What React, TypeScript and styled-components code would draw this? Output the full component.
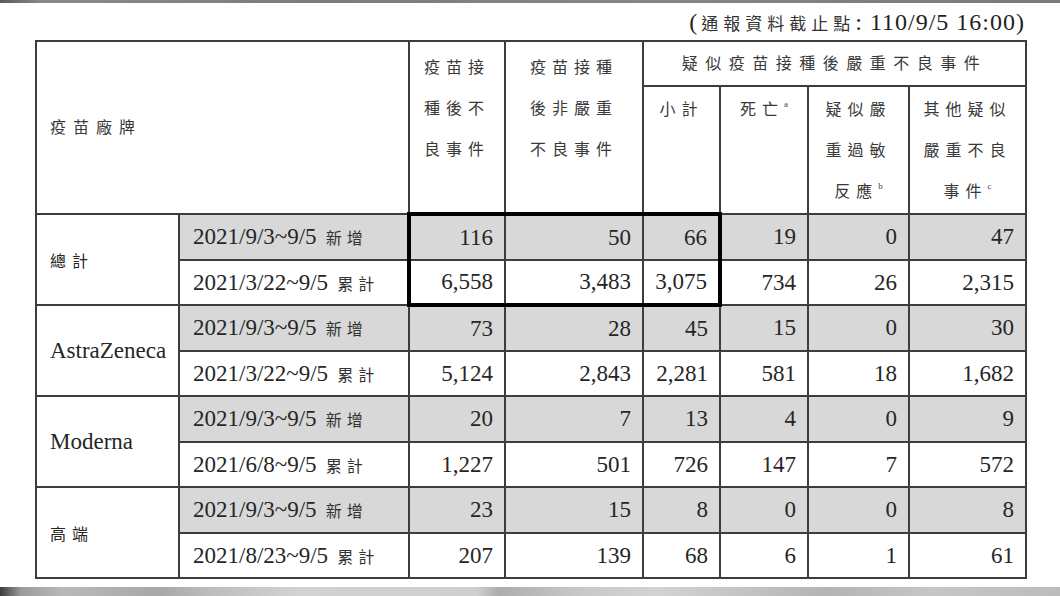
import React from 'react';
import styled, { createGlobalStyle, css } from 'styled-components';

const GlobalStyle = createGlobalStyle`
  html, body {
    margin: 0;
    padding: 0;
    background: #ffffff;
  }
`;

const latin = `"Liberation Serif", "Times New Roman", serif`;
const cjk = `"Liberation Serif", "Noto Sans CJK TC", serif`;

interface ValueRow {
    period: string;
    kind: string;
    values: string[];
}

interface Group {
    brand: string;
    brandCjk?: boolean;
    rows: ValueRow[];
}

const groups: Group[] = [
    {
        brand: '總計',
        brandCjk: true,
        rows: [
            { period: '2021/9/3~9/5', kind: '新增', values: ['116', '50', '66', '19', '0', '47'] },
            { period: '2021/3/22~9/5', kind: '累計', values: ['6,558', '3,483', '3,075', '734', '26', '2,315'] },
        ],
    },
    {
        brand: 'AstraZeneca',
        rows: [
            { period: '2021/9/3~9/5', kind: '新增', values: ['73', '28', '45', '15', '0', '30'] },
            { period: '2021/3/22~9/5', kind: '累計', values: ['5,124', '2,843', '2,281', '581', '18', '1,682'] },
        ],
    },
    {
        brand: 'Moderna',
        rows: [
            { period: '2021/9/3~9/5', kind: '新增', values: ['20', '7', '13', '4', '0', '9'] },
            { period: '2021/6/8~9/5', kind: '累計', values: ['1,227', '501', '726', '147', '7', '572'] },
        ],
    },
    {
        brand: '高端',
        brandCjk: true,
        rows: [
            { period: '2021/9/3~9/5', kind: '新增', values: ['23', '15', '8', '0', '0', '8'] },
            { period: '2021/8/23~9/5', kind: '累計', values: ['207', '139', '68', '6', '1', '61'] },
        ],
    },
];

const colWidths = [143, 230, 96, 138, 77, 88, 101, 117];

const App = () => {
    return (
        <Page>
            <GlobalStyle />
            <TopBar />
            <Content>
                <Caption>
                    (<CaptionCjk>通報資料截止點</CaptionCjk>: 110/9/5 16:00)
                </Caption>
                <Table>
                    <colgroup>
                        {colWidths.map((w, i) => <col key={i} style={{ width: w }} />)}
                    </colgroup>
                    <thead>
                        <HeadRow $height={45}>
                            <HeadCell colSpan={2} rowSpan={2} $align="left" $valign="middle">
                                <HeadText $spacing={7}>疫苗廠牌</HeadText>
                            </HeadCell>
                            <HeadCell rowSpan={2} $padTop={5}>
                                <HeadText>疫苗接<br />種後不<br />良事件</HeadText>
                            </HeadCell>
                            <HeadCell rowSpan={2} $padTop={5}>
                                <HeadText>疫苗接種<br />後非嚴重<br />不良事件</HeadText>
                            </HeadCell>
                            <HeadCell colSpan={4} $valign="middle">
                                <HeadText $spacing={7.5}>疑似疫苗接種後嚴重不良事件</HeadText>
                            </HeadCell>
                        </HeadRow>
                        <HeadRow $height={128}>
                            <HeadCell $padTop={2}><HeadText>小計</HeadText></HeadCell>
                            <HeadCell $padTop={2}><HeadText>死亡</HeadText><Sup>a</Sup></HeadCell>
                            <HeadCell $padTop={2}>
                                <HeadText>疑似嚴<br />重過敏<br />反應</HeadText><Sup>b</Sup>
                            </HeadCell>
                            <HeadCell $padTop={2}>
                                <HeadText>其他疑似<br />嚴重不良<br />事件</HeadText><Sup>c</Sup>
                            </HeadCell>
                        </HeadRow>
                    </thead>
                    <tbody>
                        {groups.map((group, gi) =>
                            group.rows.map((row, ri) => {
                                const shaded = ri === 0;
                                const boxed = gi === 0;
                                return (
                                    <BodyRow key={`${gi}-${ri}`} $height={ri === 0 ? 46 : 45}>
                                        {ri === 0 && (
                                            <BrandCell rowSpan={group.rows.length} $cjk={group.brandCjk}>
                                                {group.brand}
                                            </BrandCell>
                                        )}
                                        <PeriodCell $shade={shaded}>
                                            {row.period}<Kind>{row.kind}</Kind>
                                        </PeriodCell>
                                        {row.values.map((v, vi) => (
                                            <NumCell
                                                key={vi}
                                                $shade={shaded}
                                                $boxTop={boxed && ri === 0 && vi < 3}
                                                $boxBottom={boxed && ri === 1 && vi < 3}
                                                $boxLeft={boxed && vi === 0}
                                                $boxRight={boxed && vi === 2}
                                            >
                                                {v}
                                            </NumCell>
                                        ))}
                                    </BodyRow>
                                );
                            })
                        )}
                    </tbody>
                </Table>
            </Content>
            <BottomBar />
        </Page>
    );
};

export default App;

const Page = styled.div`
    width: 1060px;
    height: 596px;
    overflow: hidden;
    display: flex;
    flex-direction: column;
    background: #ffffff;
`;

const TopBar = styled.div`
    height: 3px;
    flex-shrink: 0;
    background: linear-gradient(to right, #5a5a5a 0%, #8a8a8a 4%, #7c7c7c 30%, #868686 60%, #7a7a7a 100%);
`;

const BottomBar = styled.div`
    height: 9px;
    flex-shrink: 0;
    background: linear-gradient(
        to right,
        #3c3c3c 0%,
        #9c9c9c 2%,
        #b9b9b9 6%,
        #a8a8a8 15%,
        #bdbdbd 20%,
        #d2d2d2 28%,
        #cfcfcf 45%,
        #adadad 47%,
        #c9c9c9 55%,
        #d3d3d3 62%,
        #b4b4b4 78%,
        #c6c6c6 88%,
        #bcbcbc 100%
    );
`;

const Content = styled.div`
    flex: 1;
    overflow: hidden;
    padding: 0 35px;
    display: flex;
    flex-direction: column;
`;

const Caption = styled.div`
    height: 37px;
    flex-shrink: 0;
    display: flex;
    align-items: center;
    justify-content: flex-end;
    font-family: ${latin};
    font-size: 24px;
    letter-spacing: 1px;
    color: #222;
    padding-top: 2px;
    box-sizing: border-box;
    white-space: pre;
`;

const CaptionCjk = styled.span`
    font-family: ${cjk};
    font-size: 17px;
    letter-spacing: 5px;
    margin-left: 3px;
    color: #333;
`;

const Table = styled.table`
    width: 990px;
    table-layout: fixed;
    border-collapse: collapse;
    flex-shrink: 0;
`;

const lineBorder = css`
    border: 2px solid #3d3d3d;
`;

const HeadRow = styled.tr<{ $height: number }>`
    height: ${p => p.$height}px;
`;

const HeadCell = styled.th<{ $align?: 'left' | 'center'; $valign?: 'top' | 'middle'; $padTop?: number }>`
    ${lineBorder}
    padding: ${p => p.$padTop ?? 0}px 0 0 ${p => (p.$align === 'left' ? 13 : 0)}px;
    text-align: ${p => p.$align ?? 'center'};
    vertical-align: ${p => p.$valign ?? 'top'};
    font-weight: 400;
    line-height: 41px;
`;

const HeadText = styled.span<{ $spacing?: number }>`
    font-family: ${cjk};
    font-size: 16px;
    line-height: 41px;
    letter-spacing: ${p => p.$spacing ?? 6}px;
    color: #3a3a3a;
`;

const Sup = styled.sup`
    font-family: ${latin};
    font-size: 9px;
    vertical-align: 8px;
    line-height: 0;
    color: #444;
`;

const BodyRow = styled.tr<{ $height: number }>`
    height: ${p => p.$height}px;
`;

const BrandCell = styled.td<{ $cjk?: boolean }>`
    ${lineBorder}
    padding: 0 0 0 13px;
    vertical-align: middle;
    background: #ffffff;
    color: #262626;
    font-family: ${p => (p.$cjk ? cjk : latin)};
    font-size: ${p => (p.$cjk ? '16px' : '23px')};
    letter-spacing: ${p => (p.$cjk ? '6px' : '0')};
`;

const shadeBg = css<{ $shade?: boolean }>`
    background: ${p => (p.$shade ? '#d8d8d8' : '#ffffff')};
`;

const PeriodCell = styled.td<{ $shade?: boolean }>`
    ${lineBorder}
    ${shadeBg}
    padding: 0 0 0 13px;
    vertical-align: middle;
    white-space: nowrap;
    font-family: ${latin};
    font-size: 23px;
    color: #262626;
`;

const Kind = styled.span`
    font-family: ${cjk};
    font-size: 16px;
    letter-spacing: 5px;
    margin-left: 9px;
    color: #333;
`;

const thick = '4px solid #000';

const NumCell = styled.td<{
    $shade?: boolean;
    $boxTop?: boolean;
    $boxBottom?: boolean;
    $boxLeft?: boolean;
    $boxRight?: boolean;
}>`
    ${lineBorder}
    ${shadeBg}
    ${p => p.$boxTop && `border-top: ${thick};`}
    ${p => p.$boxBottom && `border-bottom: ${thick};`}
    ${p => p.$boxLeft && `border-left: ${thick};`}
    ${p => p.$boxRight && `border-right: ${thick};`}
    padding: 0 11px 0 0;
    text-align: right;
    vertical-align: middle;
    font-family: ${latin};
    font-size: 23px;
    color: #262626;
`;
